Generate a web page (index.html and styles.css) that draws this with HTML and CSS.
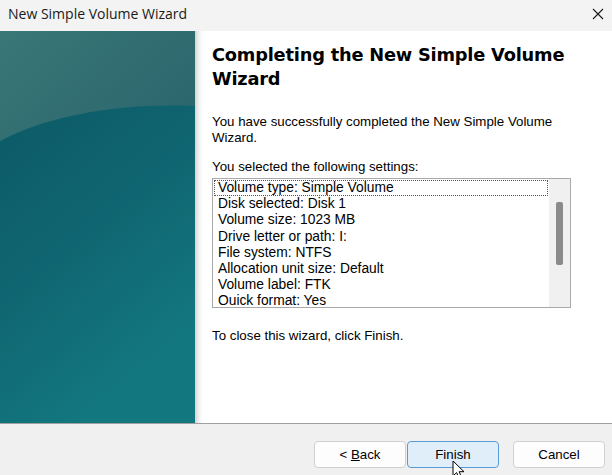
FILE: index.html
```html
<!DOCTYPE html>
<html lang="en">
<head>
    <meta charset="UTF-8">
    <title>New Simple Volume Wizard</title>
    <link rel="stylesheet" href="styles.css">
</head>
<body>
    <div class="wizard">
      <div class="titlebar">
        <span class="title">New Simple Volume Wizard</span>
        <svg class="close" width="12" height="12" viewBox="0 0 12 12">
          <path d="M1 1L11 11M11 1L1 11" stroke="#1a1a1a" stroke-width="1.1" fill="none"/>
        </svg>
      </div>

      <div class="main">
        <div class="side">
          <svg width="195" height="392" viewBox="0 0 195 392" preserveAspectRatio="none">
            <defs>
              <linearGradient id="deep" x1="0" y1="0" x2="0.4" y2="1">
                <stop offset="0" stop-color="#0b5663"/>
                <stop offset="0.55" stop-color="#0f6470"/>
                <stop offset="1" stop-color="#13777f"/>
              </linearGradient>
              <linearGradient id="light" x1="0" y1="0" x2="1" y2="0.6">
                <stop offset="0" stop-color="#3a7777"/>
                <stop offset="1" stop-color="#2b676d"/>
              </linearGradient>
            </defs>
            <rect width="195" height="392" fill="url(#deep)"/>
            <path d="M0 0H195V75C120 72 50 84 0 110Z" fill="url(#light)"/>
          </svg>
        </div>
        <div class="shade"></div>

        <div class="content">
          <h1>Completing the New Simple Volume Wizard</h1>
          <p class="intro">You have successfully completed the New Simple Volume Wizard.</p>
          <p class="label">You selected the following settings:</p>
          <div class="listbox">
            <ul class="items">
              <li class="focus">Volume type: Simple Volume</li>
              <li>Disk selected: Disk 1</li>
              <li>Volume size: 1023 MB</li>
              <li>Drive letter or path: I:</li>
              <li>File system: NTFS</li>
              <li>Allocation unit size: Default</li>
              <li>Volume label: FTK</li>
              <li>Quick format: Yes</li>
            </ul>
            <div class="scroll"><div class="thumb"></div></div>
          </div>
          <p class="close-hint">To close this wizard, click Finish.</p>
        </div>
      </div>

      <div class="footer">
        <button class="btn">&lt; <u>B</u>ack</button>
        <button class="btn default">Finish</button>
        <button class="btn cancel">Cancel</button>
        <svg class="cursor" width="14" height="20" viewBox="0 0 14 20">
          <path d="M1 1V16L4.6 12.6L7.2 18.4L9.6 17.3L7.1 11.7H12Z" fill="#fff" stroke="#000" stroke-width="1" stroke-linejoin="round"/>
        </svg>
      </div>
    </div>
</body>
</html>
```

FILE: styles.css
```css
body{
    margin: 0;
    padding: 0;
    background: #fff;
}
.wizard{
    width: 612px;
    height: 475px;
    display: flex;
    flex-direction: column;
    overflow: hidden;
    font-family: "Liberation Sans", Arial, sans-serif;
    color: #000;
}
.titlebar{
    height: 31px;
    flex: none;
    background: #f3f3f3;
    display: flex;
    align-items: center;
    justify-content: space-between;
    padding: 0 8px;
    position: relative;
}
.title{
    font-family: "Open Sans", "Noto Sans", sans-serif;
    font-size: 14px;
    color: #1a1a1a;
    margin-top: -5px;
}
.close{
    margin-top: -3px;
}
.main{
    height: 392px;
    flex: none;
    display: flex;
    background: #fff;
}
.side{
    width: 195px;
    flex: none;
}
.side svg{
    display: block;
}
.shade{
    width: 8px;
    flex: none;
    background: linear-gradient(to right, #d4d4d4, #f2f2f2 50%, #fff);
}
.content{
    padding: 12px 0 0 9px;
    flex: 1;
}
.content h1{
    font-family: "DejaVu Sans", Verdana, sans-serif;
    font-weight: bold;
    font-size: 17.8px;
    letter-spacing: -0.2px;
    line-height: 24px;
    margin: 0 0 23px 0;
    width: 370px;
}
.content p{
    margin: 0;
    font-size: 13.3px;
    line-height: 16px;
}
.intro{
    width: 360px;
    margin-bottom: 13px !important;
}
.listbox{
    width: 357px;
    height: 128px;
    border: 1px solid #a9a9a9;
    display: flex;
    margin-top: 3px;
    overflow: hidden;
}
.items{
    list-style: none;
    margin: 1px 0 0 1px;
    padding: 0;
    flex: none;
    width: 334px;
    height: 125px;
    overflow: hidden;
    font-size: 13.8px;
    line-height: 16px;
}
.items li{
    padding-left: 4px;
    height: 16.2px;
    white-space: nowrap;
}
.items li.focus{
    outline: 1px dotted #555;
    outline-offset: -1px;
}
.scroll{
    width: 21px;
    flex: none;
    background: #f0f0f0;
    margin-left: 1px;
    padding-top: 23px;
}
.thumb{
    width: 7px;
    height: 63px;
    margin-left: 7px;
    background: #8a8a8a;
    border-radius: 2px;
}
.close-hint{
    margin-top: 20px !important;
}
.footer{
    flex: 1;
    background: #f0f0f0;
    border-top: 1px solid #a0a0a0;
    display: flex;
    justify-content: flex-end;
    align-items: flex-start;
    padding: 17px 7px 0 0;
    position: relative;
}
.btn{
    width: 92px;
    height: 27px;
    background: #fdfdfd;
    border: 1px solid #d0d0d0;
    border-radius: 4px;
    font-family: "Liberation Sans", Arial, sans-serif;
    font-size: 13.3px;
    color: #000;
    padding: 0;
}
.btn.default{
    margin-left: 1px;
    background: #e0eef9;
    border-color: #5b9bd5;
}
.btn.cancel{
    margin-left: 14px;
}
.cursor{
    position: absolute;
    left: 452px;
    top: 36px;
}
```
